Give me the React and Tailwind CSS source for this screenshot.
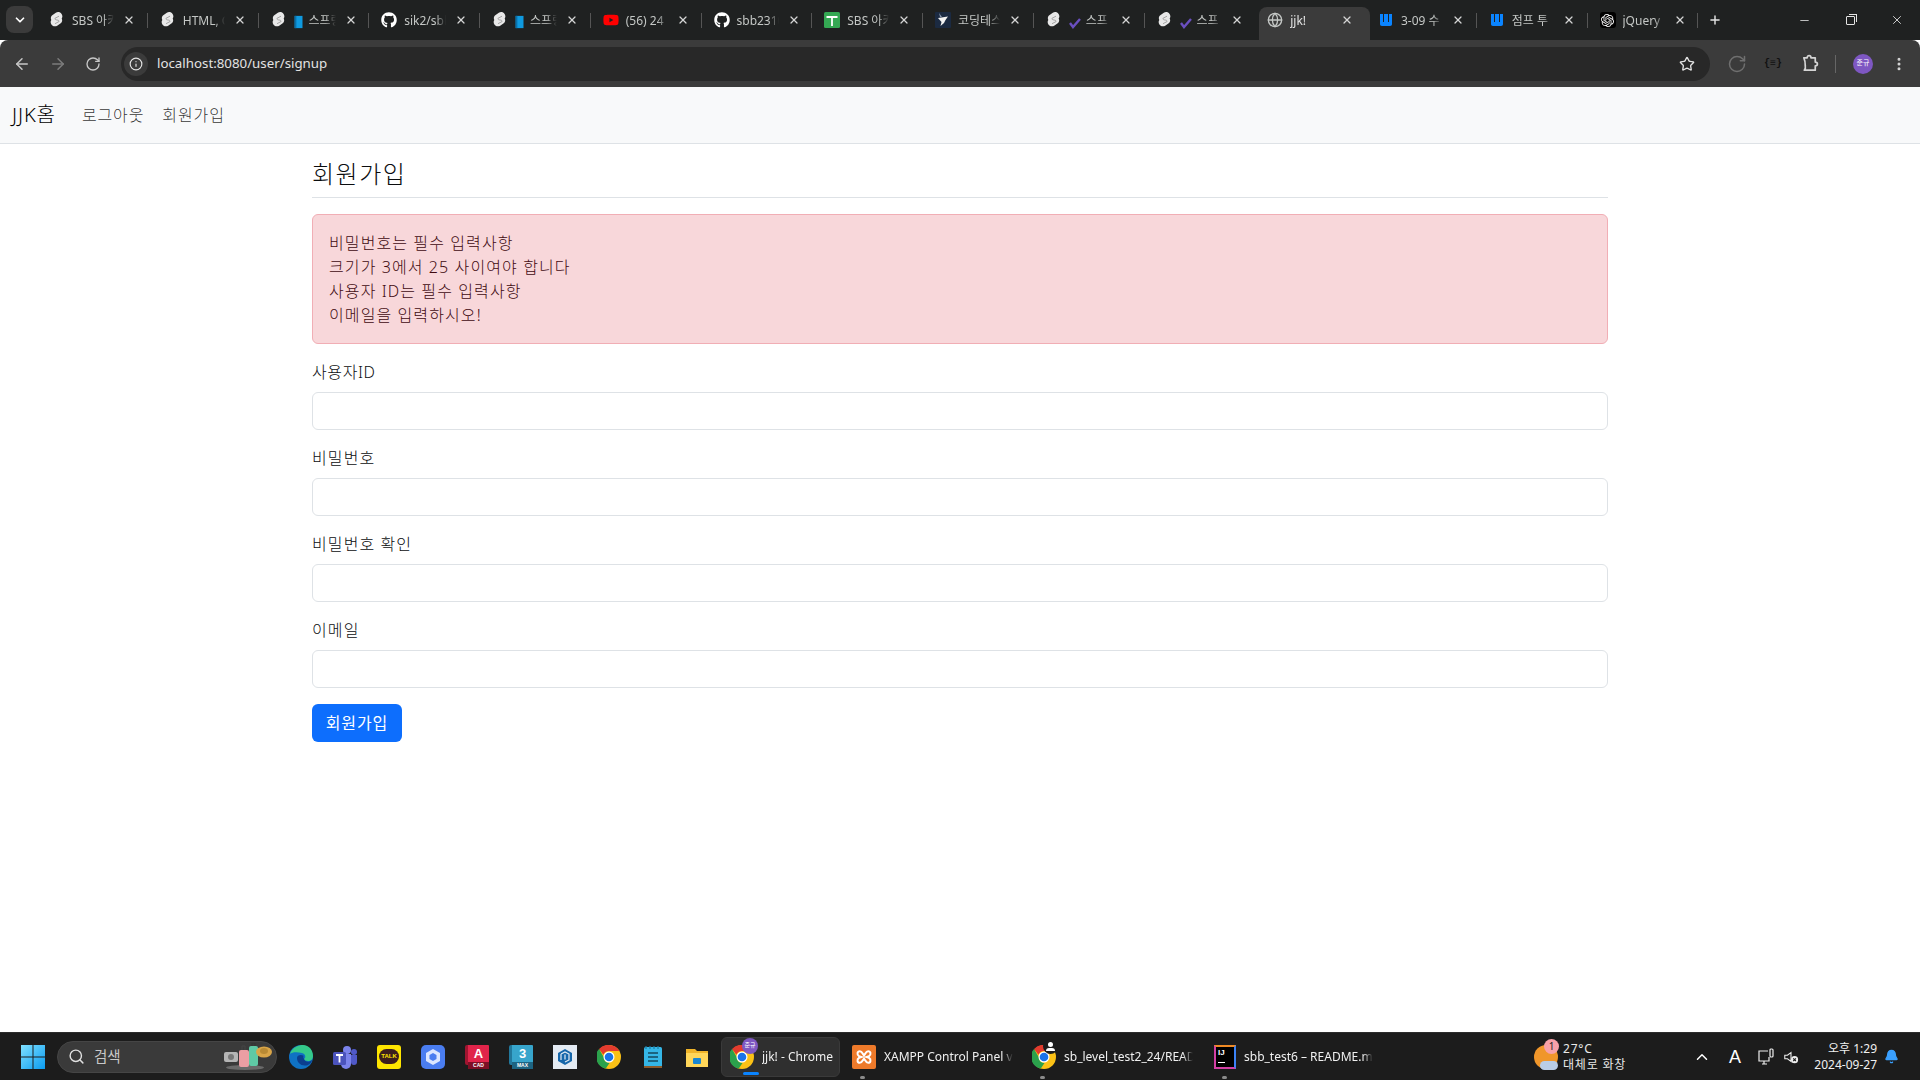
import React from "react";
import { FaGithub, FaYoutube } from "react-icons/fa";
import { SiOpenai } from "react-icons/si";
import {
  ArrowLeft,
  ArrowRight,
  RotateCw,
  Info,
  Star,
  EllipsisVertical,
  Plus,
  X,
  Minus,
  ChevronDown,
  ChevronUp,
  Search,
  Globe,
  Bell,
} from "lucide-react";

const SvelteIcon = () => (
  <svg viewBox="0 0 16 16" className="w-4 h-4 shrink-0">
    <path
      d="M12.600 1.900C11.200 0 8.700-.4 6.800.8L3.600 2.900C2.700 3.400 2.100 4.300 1.900 5.400c-.2.900 0 1.800.4 2.600-.3.400-.5.900-.6 1.400-.2 1.100.1 2.200.7 3.100C3.800 14.400 6.300 14.900 8.200 13.700l3.200-2.100c.9-.5 1.500-1.400 1.700-2.500.2-.9 0-1.800-.4-2.600.3-.4.5-.9.6-1.400.2-1.100 0-2.200-.7-3.200z"
      fill="#e8e8e8"
    />
    <path
      d="M6 6.300 10 4.200M6 11.700l4-2.100M6.200 6.200c-.8.800.2 1.700 1.800 1.800 1.600.1 2.600 1 1.800 1.800"
      stroke="#a5a5a5"
      strokeWidth="1"
      fill="none"
    />
  </svg>
);

const BookEmoji = () => (
  <svg viewBox="0 0 10 16" className="w-[10px] h-[14px] shrink-0 mt-[2px]">
    <rect x="0" y="1" width="9" height="14" fill="#0f9ae0" />
    <rect x="0" y="1" width="2" height="14" fill="#0a6fa8" />
  </svg>
);

const CheckEmoji = () => (
  <svg viewBox="0 0 12 12" className="w-3 h-3 shrink-0 mt-1">
    <path d="M1 6l3 4 7-8" stroke="#6a4fc0" strokeWidth="2.400" fill="none" />
  </svg>
);

const SheetIcon = () => (
  <svg viewBox="0 0 16 16" className="w-4 h-4 shrink-0">
    <rect width="16" height="16" rx="1.500" fill="#34a853" />
    <path d="M2.500 5h11M8 5v9" stroke="#fff" strokeWidth="1.800" />
  </svg>
);

const BirdIcon = () => (
  <svg viewBox="0 0 16 16" className="w-4 h-4 shrink-0">
    <rect width="16" height="16" rx="1" fill="#1b2a41" />
    <path d="M3 6l10-1.500L10.500 8l-1.500 3-3.500 3 1-4L3 6z" fill="#f2f2f2" />
    <path d="M4 1l3 4H5z" fill="#8796ad" />
  </svg>
);

const WIcon = () => (
  <svg viewBox="0 0 16 16" className="w-4 h-4 shrink-0">
    <path
      d="M2 2h3v8h1V2h4v8h1V2h3v10c0 1-.6 2-2 2H4c-1.400 0-2-1-2-2z"
      fill="#0a84ff"
    />
  </svg>
);

const GptIcon = () => (
  <span className="w-4 h-4 shrink-0 bg-black rounded-[3px] flex items-center justify-center">
    <SiOpenai className="w-[13px] h-[13px] text-white" />
  </span>
);

const TABS = [
  { icon: <SvelteIcon />, title: "SBS 아카" },
  { icon: <SvelteIcon />, title: "HTML, C" },
  { icon: <SvelteIcon />, emoji: <BookEmoji />, title: "스프링" },
  { icon: <FaGithub className="w-4 h-4 shrink-0 text-white" />, title: "sik2/sbb" },
  { icon: <SvelteIcon />, emoji: <BookEmoji />, title: "스프링" },
  { icon: <FaYoutube className="w-4 h-4 shrink-0 text-[#ff0000]" />, title: "(56) 24" },
  { icon: <FaGithub className="w-4 h-4 shrink-0 text-white" />, title: "sbb2310" },
  { icon: <SheetIcon />, title: "SBS 아카" },
  { icon: <BirdIcon />, title: "코딩테스" },
  { icon: <SvelteIcon />, emoji: <CheckEmoji />, title: "스프" },
  { icon: <SvelteIcon />, emoji: <CheckEmoji />, title: "스프" },
  { icon: <Globe className="w-4 h-4 shrink-0 text-[#c4c7c5]" />, title: "jjk!", active: true },
  { icon: <WIcon />, title: "3-09 수" },
  { icon: <WIcon />, title: "점프 투" },
  { icon: <GptIcon />, title: "jQuery" },
];

const Tab = ({ icon, emoji, title, active, hideSep }) => (
  <div
    className={`relative w-[110.75px] h-[33px] shrink-0 flex items-center pl-[8px] pb-[7px] ${
      active ? "bg-[#3b3b3b] rounded-t-lg" : ""
    }`}
  >
    {icon}
    <div
      className={`ml-[7px] pt-[2px] w-[42px] flex gap-[5px] overflow-hidden whitespace-nowrap text-xs [mask-image:linear-gradient(to_right,black_75%,transparent)] ${
        active ? "text-[#e3e3e3]" : "text-[#c4c7c5]"
      }`}
    >
      {emoji}
      <span>{title}</span>
    </div>
    <X className="absolute left-[82px] top-[7px] w-3 h-3 text-[#d5d5d5]" strokeWidth={2.500} />
    {!hideSep && (
      <span className="absolute right-1 top-[6px] w-px h-[15px] bg-[#555]" />
    )}
  </div>
);

const TabStrip = () => (
  <div className="h-10 bg-[#1f2121] flex items-end pl-[6px] text-white">
    <div className="self-start mt-[6px] w-[27px] h-[27px] rounded-lg bg-[#3b3b3b] flex items-center justify-center mr-2">
      <ChevronDown className="w-3.5 h-3.5" strokeWidth={3} />
    </div>
    <div className="flex self-end">
      {TABS.map((t, i) => (
        <Tab key={i} {...t} hideSep={t.active || i === 10} />
      ))}
    </div>
    <Plus className="self-start mt-[13px] ml-[6px] w-[14px] h-[14px] text-[#e3e3e3]" strokeWidth={2.500} />
    <div className="self-start ml-auto flex h-10 items-center text-[#e3e3e3]">
      <span className="w-[46px] flex justify-center">
        <Minus className="w-[13px] h-[13px]" strokeWidth={1.500} />
      </span>
      <span className="w-[47px] flex justify-center">
        <span className="relative w-[9px] h-[9px] border border-[#e3e3e3] rounded-[1px] after:absolute after:-top-[3px] after:-right-[3px] after:w-[8px] after:h-[8px] after:border-t after:border-r after:border-[#e3e3e3]" />
      </span>
      <span className="w-[46px] flex justify-center">
        <X className="w-[14px] h-[14px]" strokeWidth={1.500} />
      </span>
    </div>
  </div>
);

const ExtensionIcon = () => (
  <svg viewBox="0 0 20 20" className="ml-[19px] w-[19px] h-[19px]" fill="none" stroke="#d5d5d5" strokeWidth="1.800">
    <path d="M3 4h3.500c0-3 4-3 4 0H15v4.500c3 0 3 4 0 4V17H3.500c1-1 1.500-2 1-4.500C4.500 9 4 6 3 4z" strokeLinejoin="round" />
  </svg>
);

const Toolbar = () => (
  <div className="h-[47px] bg-[#3b3b3b] rounded-t-lg flex items-center pl-[13px] pr-[13px] text-[#c7c7c7]">
    <ArrowLeft className="w-[18px] h-[18px] text-[#c7c7c7]" strokeWidth={2} />
    <ArrowRight className="ml-[18px] w-[18px] h-[18px] text-[#7c7c7c]" strokeWidth={2} />
    <RotateCw className="ml-[18px] w-4 h-4" strokeWidth={2} />
    <div className="ml-[20px] w-[1589px] h-[34px] rounded-full bg-[#282828] flex items-center pl-[3px] pr-[15px] text-[13.300px] text-[#e3e3e3]">
      <span className="w-[24px] h-[24px] rounded-full bg-[#3b3b3b] flex items-center justify-center">
        <Info className="w-[14px] h-[14px]" />
      </span>
      <span className="ml-[9px]">localhost:8080/user/signup</span>
      <Star className="ml-auto w-4 h-4 text-[#e3e3e3]" strokeWidth={2} />
    </div>
    <RotateCw className="ml-[17px] w-5 h-5 text-[#6f6f6f]" strokeWidth={1.800} />
    <span className="ml-[17px] text-[10px] font-bold text-[#111] font-['Liberation_Mono',monospace]">{"{≡}"}</span>
    <ExtensionIcon />
    <span className="ml-[15px] w-px h-[18px] bg-[#666]" />
    <span className="ml-[17px] w-[20px] h-[20px] rounded-full bg-[#7e57c2] text-white text-[7px] flex items-center justify-center">
      준규
    </span>
    <EllipsisVertical className="ml-[18px] w-4 h-4 text-[#d5d5d5]" strokeWidth={2.500} />
  </div>
);

const Field = ({ label, spacing = "tracking-[1.1px]" }) => (
  <div className="mb-4">
    <label className={`block mb-2 h-6 leading-6 text-[#0b0d0f] ${spacing}`}>{label}</label>
    <div className="h-[38px] bg-white border border-[#dee2e6] rounded-md" />
  </div>
);

const Page = () => (
  <div className="flex-1 bg-white font-light">
    <nav className="h-[57px] bg-[#f8f9fa] border-b border-[#dee2e6] flex items-center pl-3 tracking-[0.9px]">
      <span className="text-xl text-black mr-[26px]">JJK홈</span>
      <a className="text-black/80 mr-[18px]">로그아웃</a>
      <a className="text-black/80">회원가입</a>
    </nav>
    <main className="w-[1296px] mx-auto">
      <h4 className="pt-[15px] pb-[9px] text-2xl leading-[29px] tracking-[1.5px] text-[#0b0d0f] border-b border-[#dee2e6]">
        회원가입
      </h4>
      <div className="mt-[16px] mb-4 p-4 bg-[#f8d7da] border border-[#f1aeb5] rounded-md text-[#3f0a10] leading-6 tracking-[1.1px]">
        <div>비밀번호는 필수 입력사항</div>
        <div>크기가 3에서 25 사이여야 합니다</div>
        <div>사용자 ID는 필수 입력사항</div>
        <div>이메일을 입력하시오!</div>
      </div>
      <Field label="사용자ID" spacing="tracking-[0.6px]" />
      <Field label="비밀번호" />
      <Field label="비밀번호 확인" />
      <Field label="이메일" />
      <button className="h-[38px] w-[90px] bg-[#0d6efd] text-white font-normal rounded-md tracking-[0.9px]">회원가입</button>
    </main>
  </div>
);

const WinLogo = () => (
  <svg viewBox="0 0 24 24" className="w-6 h-6 shrink-0">
    <defs>
      <linearGradient id="win" x1="0" y1="0" x2="1" y2="1">
        <stop offset="0" stopColor="#7fe0ff" />
        <stop offset="1" stopColor="#0a9bf0" />
      </linearGradient>
    </defs>
    <path d="M0 0h11.500v11.500H0zM12.500 0H24v11.500H12.500zM0 12.500h11.500V24H0zM12.500 12.500H24V24H12.500z" fill="url(#win)" />
  </svg>
);

const SearchArt = () => (
  <svg viewBox="0 0 50 28" className="ml-auto mr-[3px] w-[50px] h-[28px]">
    <ellipse cx="22" cy="24.500" rx="19" ry="2.500" fill="#6a6a6a" />
    <rect x="1" y="9" width="14" height="10" rx="2" fill="#b5b5b5" />
    <circle cx="8" cy="14" r="3" fill="#777" />
    <path d="M19 7V3h3v4" stroke="#444" fill="none" />
    <rect x="16" y="7" width="10" height="17" rx="2" fill="#eb9ea3" />
    <path d="M29 3V0h3v3" stroke="#333" fill="none" />
    <rect x="26" y="3" width="9" height="20" rx="2" fill="#5fc9a5" />
    <ellipse cx="41" cy="9" rx="8" ry="5.500" fill="#d9a548" />
    <ellipse cx="41" cy="8" rx="4" ry="3" fill="#b98a34" />
  </svg>
);

const EdgeIcon = () => (
  <svg viewBox="0 0 24 24" className="w-6 h-6">
    <circle cx="12" cy="12" r="12" fill="#0f72c4" />
    <path d="M1 9C3 2 10 0 14 0c6 0 10 5 10 11 0 3-2 5-5 5-2 0-4-1-4-2 2-1 2-5-2-6C8 7 3 7 1 9z" fill="#35c98a" />
    <path d="M8 13c0 5 5 9 11 7 2-1 4-3 4-5-3 3-7 2-8-1-1-2-1-3 0-3-3-2-7-1-7 2z" fill="#0b3f8f" />
  </svg>
);

const TeamsIcon = () => (
  <svg viewBox="0 0 24 24" className="w-6 h-6">
    <circle cx="14" cy="5" r="4" fill="#7b83eb" />
    <circle cx="21" cy="7" r="3" fill="#5059c9" />
    <path d="M8 9h10v10a5 5 0 0 1-10 0z" fill="#7b83eb" />
    <path d="M18 10h6v7a3 3 0 0 1-6 0z" fill="#5059c9" />
    <rect x="0" y="7" width="13" height="13" rx="1.500" fill="#4b53bc" />
    <path d="M3 10h7M6.500 10v7.500" stroke="#fff" strokeWidth="1.800" />
  </svg>
);

const KakaoIcon = () => (
  <span className="relative w-6 h-6 rounded-[3px] bg-[#fee500] flex items-center justify-center">
    <span className="w-[20px] h-[15px] rounded-full bg-[#3c1e1e] text-[#fee500] text-[6px] font-bold leading-[15px] text-center font-['Liberation_Sans',sans-serif]">
      TALK
    </span>
  </span>
);

const CubeIcon = () => (
  <svg viewBox="0 0 24 24" className="w-6 h-6">
    <rect width="24" height="24" rx="5" fill="#4a7df0" />
    <path d="M12 4l7 4v8l-7 4-7-4V8z" fill="#dbe6ff" />
    <path d="M12 8l3.500 2v4L12 16l-3.500-2v-4z" fill="#4a7df0" />
  </svg>
);

const AutoCadIcon = () => (
  <span className="relative w-6 h-6 flex flex-col items-center text-white font-['Liberation_Sans',sans-serif] font-bold">
    <span className="absolute left-0 top-0 w-[3px] h-[20px] bg-[#a01530] rounded-l-[2px]" />
    <span className="ml-[3px] w-[21px] h-[17px] bg-[#e0244a] text-center text-[13px] leading-[17px] rounded-tr-[1px]">A</span>
    <span className="ml-[3px] w-[21px] h-[7px] bg-[#7d0f25] text-[5px] leading-[7px] text-center">CAD</span>
  </span>
);

const MaxIcon = () => (
  <span className="relative w-6 h-6 flex flex-col items-center text-white font-['Liberation_Sans',sans-serif] font-bold">
    <span className="absolute left-0 top-0 w-[3px] h-[20px] bg-[#22789c] rounded-l-[2px]" />
    <span className="ml-[3px] w-[21px] h-[17px] bg-[#37a5cc] text-center text-[13px] leading-[17px] rounded-tr-[1px]">3</span>
    <span className="ml-[3px] w-[21px] h-[7px] bg-[#1d6482] text-[5px] leading-[7px] text-center">MAX</span>
  </span>
);

const SketchIcon = () => (
  <svg viewBox="0 0 24 24" className="w-6 h-6">
    <rect width="24" height="24" fill="#e4ebf3" />
    <path d="M5 8l7-4 7 4v8l-7 4-7-4z" fill="#1667ab" />
    <path d="M8 9l4-2 4 2v6l-4 2M12 9.500v5M8 9v6" stroke="#e4ebf3" strokeWidth="1.200" fill="none" />
  </svg>
);

const ChromeIcon = () => (
  <svg viewBox="0 0 24 24" className="w-6 h-6">
    <circle cx="12" cy="12" r="12" fill="#fbc116" />
    <path d="M12 0a12 12 0 0 1 10.400 6H12a6 6 0 0 0-5.600 3.800L2 3.900A12 12 0 0 1 12 0z" fill="#e33b2e" />
    <path d="M2 3.900l5 8.500a5 5 0 0 0 5.500 5.500L8.800 23.600A12 12 0 0 1 2 3.900z" fill="#2ba24c" />
    <circle cx="12" cy="12" r="5.500" fill="#fff" />
    <circle cx="12" cy="12" r="4.300" fill="#1a73e8" />
  </svg>
);

const NotepadIcon = () => (
  <svg viewBox="0 0 24 24" className="w-6 h-6">
    <rect x="3" y="2" width="18" height="21" rx="1.500" fill="#35b6e6" />
    <rect x="3" y="21" width="18" height="2" fill="#8a5a2b" />
    <path d="M7 8h10M7 12h10M7 16h10" stroke="#14495f" strokeWidth="1.600" />
    <path d="M5 1v3M9 1v3M13 1v3M17 1v3" stroke="#1a7ea6" strokeWidth="1.200" />
  </svg>
);

const FolderIcon = () => (
  <svg viewBox="0 0 24 24" className="w-6 h-6">
    <path d="M1 4h9l2 2h11v15H1z" fill="#f0b429" />
    <path d="M1 8h22v14H1z" fill="#ffd659" />
    <rect x="8" y="13" width="8" height="6" rx="1" fill="#1a86d0" />
  </svg>
);

const XamppIcon = () => (
  <span className="w-[24px] h-[24px] bg-[#ee7a2a] rounded-[2px] flex items-center justify-center">
    <svg viewBox="0 0 24 24" className="w-5 h-5">
      <path d="M7 5c3 0 3 3 5 5 2-2 2-5 5-5s4 4 1 6l-3 1 3 1c3 2 2 6-1 6s-3-3-5-5c-2 2-2 5-5 5s-4-4-1-6l3-1-3-1C3 9 4 5 7 5z" fill="none" stroke="#fff" strokeWidth="2.400" />
    </svg>
  </span>
);

const IdeaIcon = () => (
  <span className="relative w-[22px] h-[24px] bg-black border-2 border-[#d33fa5] border-t-[#f08a24] border-r-[#3b82f6] flex flex-col pl-[2px] text-white text-[8px] font-bold leading-[11px] font-['Liberation_Sans',sans-serif]">
    IJ
    <span className="mt-[4px] w-[7px] h-[1.500px] bg-white" />
  </span>
);

const IconSlot = ({ children }) => (
  <span className="w-[44px] shrink-0 flex items-center justify-center">{children}</span>
);

const TaskItem = ({ icon, title, width, active, running, badge }) => (
  <div
    className={`relative h-[40px] shrink-0 flex items-center pl-[8px] rounded-md ${width} ${
      active ? "bg-[#2f2f2f] border border-[#3a3a3a]" : ""
    }`}
  >
    <span className="relative shrink-0">
      {icon}
      {badge}
    </span>
    <span className="ml-2 w-[129px] overflow-hidden whitespace-nowrap text-xs text-[#f0f0f0] [mask-image:linear-gradient(to_right,black_92%,transparent)]">
      {title}
    </span>
    {active && (
      <span className="absolute bottom-[1px] left-[21px] w-[16px] h-[3px] rounded-full bg-[#0a84ff]" />
    )}
    {running && (
      <span className="absolute bottom-[-2px] left-[16px] w-[5px] h-[3px] rounded-full bg-[#8b8b8b]" />
    )}
  </div>
);

const Taskbar = () => (
  <div className="h-[48px] bg-[#1c1c1c] border-t border-[#2c2c2c] flex items-center pl-[21px] text-white">
    <WinLogo />
    <div className="ml-[12px] w-[220px] h-[32px] rounded-full bg-[#3a3a3a] border border-[#454545] flex items-center pl-[10px] text-[14.500px] text-[#c8c8c8]">
      <Search className="w-[17px] h-[17px] text-[#e0e0e0]" strokeWidth={2} />
      <span className="ml-[9px]">검색</span>
      <SearchArt />
    </div>
    <div className="ml-[2px] flex">
      <IconSlot><EdgeIcon /></IconSlot>
      <IconSlot><TeamsIcon /></IconSlot>
      <IconSlot><KakaoIcon /></IconSlot>
      <IconSlot><CubeIcon /></IconSlot>
      <IconSlot><AutoCadIcon /></IconSlot>
      <IconSlot><MaxIcon /></IconSlot>
      <IconSlot><SketchIcon /></IconSlot>
      <IconSlot><ChromeIcon /></IconSlot>
      <IconSlot><NotepadIcon /></IconSlot>
      <IconSlot><FolderIcon /></IconSlot>
    </div>
    <div className="ml-[2px] flex gap-[4px]">
      <TaskItem
        active
        width="w-[119px]"
        icon={<ChromeIcon />}
        title="jjk! - Chrome"
        badge={
          <span className="absolute -top-[7px] left-[12px] w-[16px] h-[16px] rounded-full bg-[#7e57c2] text-white text-[6px] flex items-center justify-center">
            준규
          </span>
        }
      />
      <TaskItem running width="w-[176px]" icon={<XamppIcon />} title="XAMPP Control Panel v3.3.0" />
      <TaskItem
        running
        width="w-[178px]"
        icon={<ChromeIcon />}
        title="sb_level_test2_24/README.md"
        badge={
          <span className="absolute -top-[6px] left-[11px] w-[15px] h-[15px] rounded-full bg-[#1c1c1c] flex flex-col items-center justify-center gap-[1px]">
            <span className="w-[5px] h-[5px] rounded-full bg-white" />
            <span className="w-[9px] h-[3px] rounded-t bg-white" />
          </span>
        }
      />
      <TaskItem running width="w-[176px]" icon={<IdeaIcon />} title="sbb_test6 – README.md" />
    </div>
    <div className="ml-auto flex items-center">
      <span className="relative w-[24px] h-[24px] rounded-full bg-[#f0962a]">
        <span className="absolute -bottom-[1px] left-[6px] w-[18px] h-[9px] rounded-full bg-[#b9cde6]" />
        <span className="absolute -top-[6px] left-[10px] w-[15px] h-[15px] rounded-full bg-[#f7a1a8] text-[#222] text-[10px] leading-[15px] text-center">
          1
        </span>
      </span>
      <div className="ml-[5px] w-[117px] text-xs tracking-[0.8px] leading-[16px] text-[#e8e8e8]">
        <div>27°C</div>
        <div>대체로 화창</div>
      </div>
      <ChevronUp className="ml-[13px] w-[18px] h-[18px]" strokeWidth={2} />
      <span className="ml-[15px] w-[18px] text-center text-[18px] leading-none font-['Liberation_Sans',sans-serif] font-light">A</span>
      <svg viewBox="0 0 18 18" className="ml-[13px] w-[18px] h-[18px]" fill="none" stroke="#eee" strokeWidth="1.200">
        <path d="M11 3H2v10h10V9M5 16h5M7 13v3" />
        <rect x="13" y="1" width="3" height="8" rx="1" />
      </svg>
      <svg viewBox="0 0 18 18" className="ml-[8px] w-[16px] h-[16px]" fill="none" stroke="#eee" strokeWidth="1.200">
        <path d="M2 7v4h3l4 3V4L5 7z" />
        <circle cx="13" cy="12" r="4" fill="#eee" stroke="none" />
        <path d="M11.500 10.500l3 3M14.500 10.500l-3 3" stroke="#1c1c1c" />
      </svg>
      <div className="ml-[10px] w-[68px] text-right text-[12px] leading-[16px] text-[#f0f0f0]">
        <div>오후 1:29</div>
        <div>2024-09-27</div>
      </div>
      <Bell className="ml-[7px] mr-[21px] w-[15px] h-[15px] text-[#3aa0ff]" fill="#3aa0ff" />
    </div>
  </div>
);

const App = () => (
  <div className="w-[1920px] h-[1080px] flex flex-col overflow-hidden font-['Noto_Sans','Noto_Sans_CJK_KR',sans-serif]">
    <TabStrip />
    <Toolbar />
    <Page />
    <Taskbar />
  </div>
);

export default App;
